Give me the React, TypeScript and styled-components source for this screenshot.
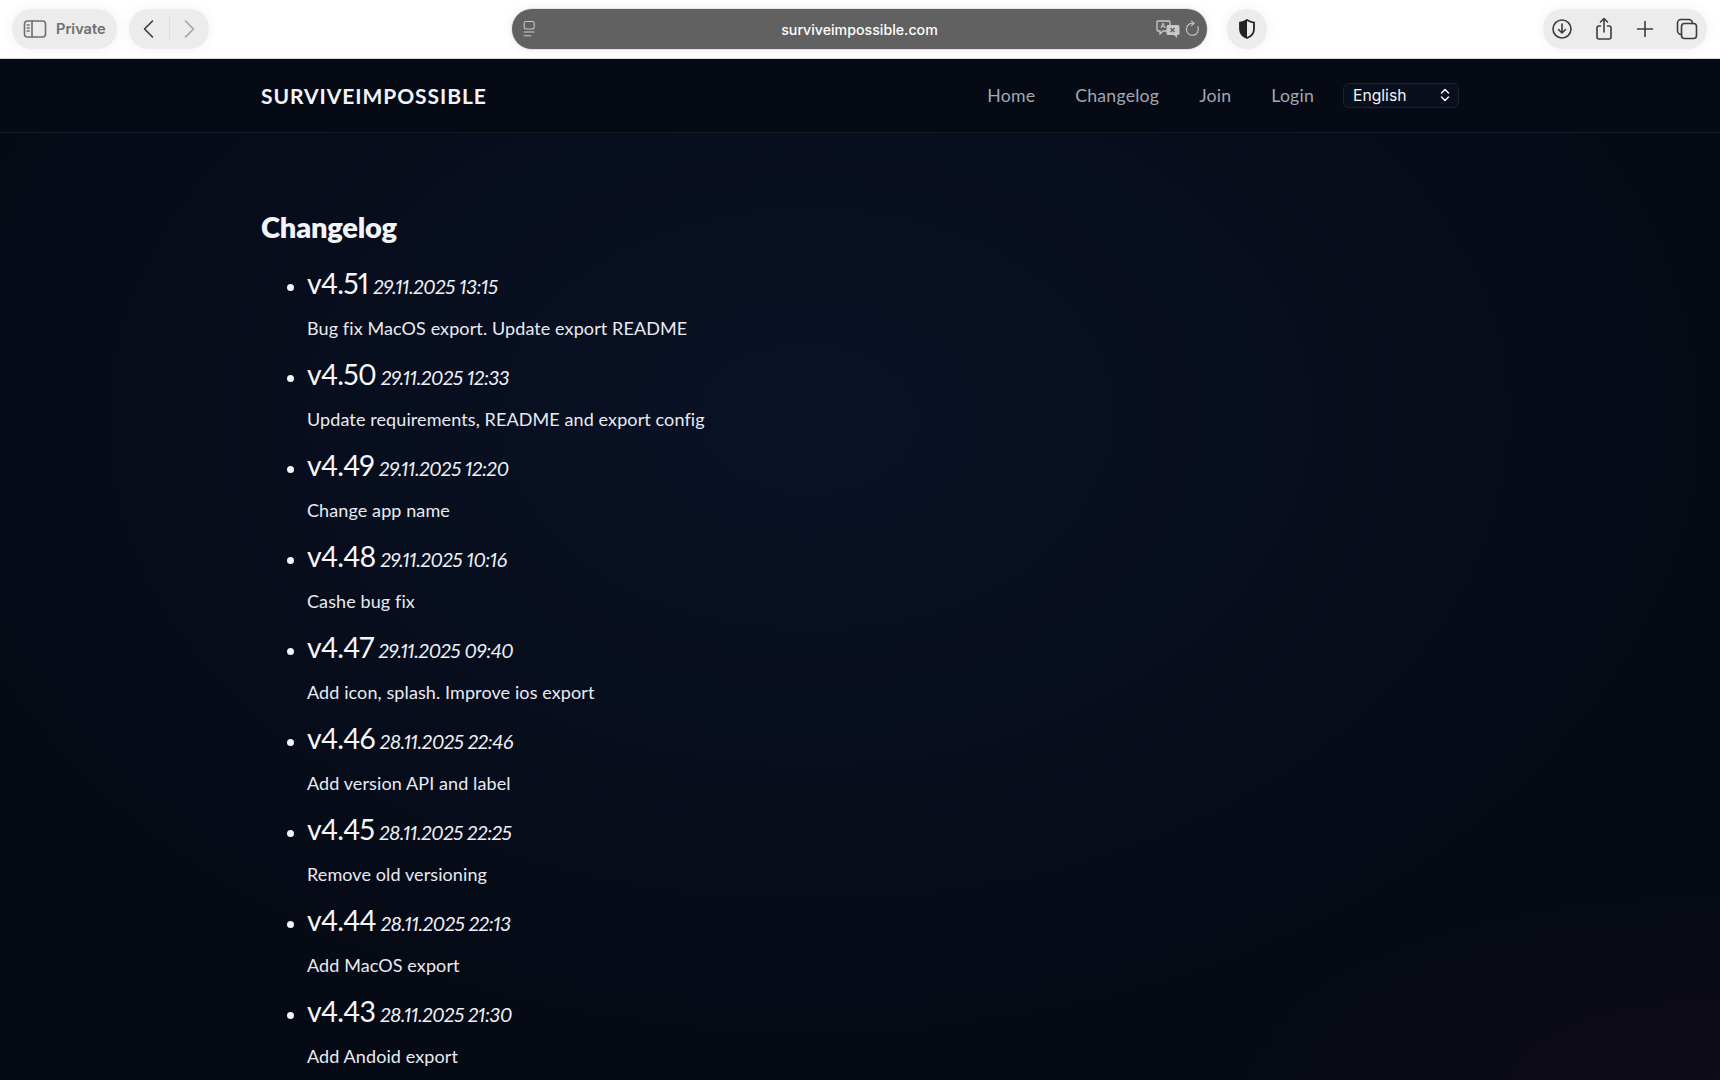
import React from 'react';
import styled, { createGlobalStyle } from 'styled-components';

const GlobalStyle = createGlobalStyle`
  html, body {
    margin: 0;
    padding: 0;
    height: 1080px;
    overflow: hidden;
    background: #050a15;
  }
  * {
    box-sizing: border-box;
  }
`;

const Page = styled.div`
  width: 1720px;
  height: 1080px;
  display: flex;
  flex-direction: column;
  overflow: hidden;
  font-family: 'Lato', 'Liberation Sans', sans-serif;
  font-variant-numeric: proportional-nums;
`;

const Toolbar = styled.div`
  height: 59px;
  flex: none;
  display: flex;
  align-items: center;
  padding: 0 12px;
  background: #fff;
  border-bottom: 1px solid #d8d8d8;
  font-family: 'Inter', 'Liberation Sans', sans-serif;
`;

const Pill = styled.div`
  height: 40px;
  display: flex;
  align-items: center;
  background: #ececec;
  border-radius: 20px;
  box-shadow: 0 0 14px rgba(0, 0, 0, 0.06);
  color: #3c3c3c;
`;

const PrivatePill = styled(Pill)`
  width: 105px;
  padding-left: 11px;
  gap: 9px;
  font-size: 14.6px;
  font-weight: 600;
  color: #6f6f6f;
`;

const NavPill = styled(Pill)`
  width: 80px;
  margin-left: 12px;
`;

const NavSide = styled.div<{ $faded?: boolean }>`
  flex: 1;
  height: 24px;
  display: flex;
  align-items: center;
  justify-content: center;
  color: ${(p) => (p.$faded ? '#a2a2a2' : '#3a3a3a')};
  & + & {
    border-left: 1px solid #dcdcdc;
  }
`;

const AddressBar = styled.div`
  width: 695px;
  height: 40px;
  margin-left: 303px;
  display: flex;
  align-items: center;
  justify-content: space-between;
  padding: 0 5px 0 8px;
  position: relative;
  background: #616161;
  border-radius: 20px;
  box-shadow: 0 0 0 1px #e3e3e3, 0 0 12px rgba(0, 0, 0, 0.08);
  color: #c8c8c8;
`;

const Url = styled.span`
  position: absolute;
  left: 0;
  right: 0;
  text-align: center;
  font-size: 14.2px;
  font-weight: 500;
  color: #fff;
`;

const AddressActions = styled.div`
  display: flex;
  align-items: center;
  gap: 4px;
`;

const ShieldPill = styled(Pill)`
  width: 40px;
  margin-left: 20px;
  justify-content: center;
  color: #222;
`;

const RightPill = styled(Pill)`
  width: 164px;
  margin-left: auto;
  margin-right: 1px;
  padding: 0 8px 0 7px;
  justify-content: space-between;
`;

const SiteHeader = styled.header`
  height: 74px;
  flex: none;
  background: #050a15;
  border-bottom: 1px solid #141a28;
`;

const HeaderInner = styled.div`
  width: 1198px;
  height: 100%;
  margin-left: 261px;
  display: flex;
  align-items: center;
  justify-content: space-between;
`;

const Logo = styled.div`
  font-size: 21px;
  font-weight: 700;
  letter-spacing: 0.95px;
  color: #f3f4fa;
`;

const Nav = styled.nav`
  display: flex;
  align-items: center;
`;

const NavLink = styled.a`
  font-size: 17.7px;
  letter-spacing: 0.2px;
  color: #a4a7b0;
  margin-right: 40px;
  &:last-of-type {
    margin-right: 29px;
  }
`;

const LangSelect = styled.div`
  width: 116px;
  height: 25px;
  display: flex;
  align-items: center;
  justify-content: space-between;
  padding: 0 7px 1px 9px;
  border: 1px solid #1c2233;
  border-radius: 6px;
  background: #0a0f1e;
  font-family: 'Inter', 'Liberation Sans', sans-serif;
  font-size: 15.7px;
  color: #f4f5f8;
`;

const Main = styled.main`
  flex: 1;
  padding: 75px 0 0 261px;
  color: #f3f4fa;
  background:
    radial-gradient(ellipse 900px 620px at 47% 30%, #0a1226 0%, rgba(10, 18, 38, 0) 100%),
    radial-gradient(ellipse 500px 200px at 100% 100%, #0f0b18 0%, rgba(15, 11, 24, 0) 100%),
    #050a15;
`;

const Title = styled.h1`
  margin: 0 0 20px;
  height: 38px;
  line-height: 38px;
  font-size: 29px;
  font-weight: 800;
  letter-spacing: -0.2px;
`;

const Releases = styled.ul`
  margin: 0;
  padding: 0 0 0 46px;
`;

const Release = styled.li`
  height: 91px;
  &::marker {
    font-size: 20px;
  }
`;

const ReleaseHead = styled.div`
  height: 49px;
  line-height: 34px;
  white-space: nowrap;
`;

const Version = styled.span`
  font-size: 28.5px;
  font-weight: 400;
  letter-spacing: -0.75px;
  color: #f6f7fb;
`;

const ReleaseDate = styled.em`
  margin-left: 5px;
  font-size: 20px;
  letter-spacing: -0.45px;
  color: #eef0f6;
`;

const ReleaseNote = styled.p`
  margin: 0;
  font-size: 18px;
  line-height: 26px;
  letter-spacing: 0.1px;
  color: #e9ebf2;
`;

const releases = [
  ['v4.51', '29.11.2025 13:15', 'Bug fix MacOS export. Update export README'],
  ['v4.50', '29.11.2025 12:33', 'Update requirements, README and export config'],
  ['v4.49', '29.11.2025 12:20', 'Change app name'],
  ['v4.48', '29.11.2025 10:16', 'Cashe bug fix'],
  ['v4.47', '29.11.2025 09:40', 'Add icon, splash. Improve ios export'],
  ['v4.46', '28.11.2025 22:46', 'Add version API and label'],
  ['v4.45', '28.11.2025 22:25', 'Remove old versioning'],
  ['v4.44', '28.11.2025 22:13', 'Add MacOS export'],
  ['v4.43', '28.11.2025 21:30', 'Add Andoid export'],
];

const Icon: React.FC<{ size?: number; weight?: number; children: React.ReactNode }> = ({ size = 22, weight = 1.6, children }) => (
  <svg
    width={size}
    height={size}
    viewBox="0 0 24 24"
    fill="none"
    stroke="currentColor"
    strokeWidth={weight}
    strokeLinecap="round"
    strokeLinejoin="round"
  >
    {children}
  </svg>
);

const App: React.FC = () => {
  return (
    <Page>
      <GlobalStyle />
      <Toolbar>
        <PrivatePill>
          <Icon size={24}>
            <rect x="1.5" y="4" width="21" height="16" rx="3" />
            <path d="M9 4v16M4.2 8h2M4.2 11h2M4.2 14h2" />
          </Icon>
          Private
        </PrivatePill>
        <NavPill>
          <NavSide>
            <Icon size={24}>
              <path d="M15.500 4l-8 8 8 8" />
            </Icon>
          </NavSide>
          <NavSide $faded>
            <Icon size={24}>
              <path d="M8.500 4l8 8-8 8" />
            </Icon>
          </NavSide>
        </NavPill>
        <AddressBar>
          <Icon size={20} weight={1.3}>
            <rect x="5" y="3" width="12" height="9" rx="2" />
            <path d="M5 15.500h12M5 20h8" />
          </Icon>
          <Url>surviveimpossible.com</Url>
          <AddressActions>
            <svg width="24" height="20" viewBox="0 0 24 20">
              <path d="M2 2h11a1 1 0 0 1 1 1v8a1 1 0 0 1-1 1H7l-3 3v-3H2a1 1 0 0 1-1-1V3a1 1 0 0 1 1-1z" fill="none" stroke="currentColor" strokeWidth="1.3" />
              <path d="M12 6h10a1.500 1.500 0 0 1 1.500 1.500v7a1.500 1.500 0 0 1-1.500 1.500h-1v3l-3-3h-6a1.500 1.500 0 0 1-1.500-1.500v-7A1.500 1.500 0 0 1 12 6z" fill="currentColor" />
              <path d="M14.500 9l4 4M18.500 9l-4 4" stroke="#616161" strokeWidth="1.400" />
              <path d="M5 9l2-5 2 5M5.800 7.500h2.400" fill="none" stroke="currentColor" strokeWidth="1" />
            </svg>
            <Icon size={18} weight={1.5}>
              <path d="M18.500 9a8 8 0 1 1-5.500-4.500" />
              <path d="M10 1.500l3.500 3-3.500 3" />
            </Icon>
          </AddressActions>
        </AddressBar>
        <ShieldPill>
          <svg width="20" height="22" viewBox="0 0 20 22">
            <path d="M10 2c2.500 1.500 4.500 2.300 7 2.600V11c0 4.500-3 7.500-7 9-4-1.500-7-4.500-7-9V4.600C5.500 4.300 7.500 3.500 10 2z" fill="none" stroke="currentColor" strokeWidth="1.800" />
            <path d="M10 2c-2.500 1.500-4.500 2.300-7 2.600V11c0 4.500 3 7.500 7 9z" fill="currentColor" />
          </svg>
        </ShieldPill>
        <RightPill>
          <Icon size={24}>
            <circle cx="12" cy="12" r="9" />
            <path d="M12 7v9M8.500 12.500L12 16l3.500-3.500" />
          </Icon>
          <Icon size={24}>
            <path d="M8.500 9H7a2 2 0 0 0-2 2v9a2 2 0 0 0 2 2h10a2 2 0 0 0 2-2v-9a2 2 0 0 0-2-2h-1.500" />
            <path d="M12 15V1.500M8.500 5L12 1.500 15.500 5" />
          </Icon>
          <Icon size={24}>
            <path d="M12 4.500v15M4.500 12h15" />
          </Icon>
          <Icon size={24}>
            <rect x="6.500" y="6.500" width="15" height="15" rx="3" />
            <path d="M6.500 17.500A4 4 0 0 1 2.500 13.500V6a3.500 3.500 0 0 1 3.500-3.500h7.500a4 4 0 0 1 4 4" />
          </Icon>
        </RightPill>
      </Toolbar>
      <SiteHeader>
        <HeaderInner>
          <Logo>SURVIVEIMPOSSIBLE</Logo>
          <Nav>
            <NavLink>Home</NavLink>
            <NavLink>Changelog</NavLink>
            <NavLink>Join</NavLink>
            <NavLink>Login</NavLink>
            <LangSelect>
              English
              <svg width="12" height="16" viewBox="0 0 12 16" fill="none" stroke="currentColor" strokeWidth="1.500" strokeLinecap="round" strokeLinejoin="round">
                <path d="M2.500 6L6 2.500 9.500 6M2.500 10L6 13.500 9.500 10" />
              </svg>
            </LangSelect>
          </Nav>
        </HeaderInner>
      </SiteHeader>
      <Main>
        <Title>Changelog</Title>
        <Releases>
          {releases.map(([version, date, note]) => (
            <Release key={version}>
              <ReleaseHead>
                <Version>{version}</Version>
                <ReleaseDate>{date}</ReleaseDate>
              </ReleaseHead>
              <ReleaseNote>{note}</ReleaseNote>
            </Release>
          ))}
        </Releases>
      </Main>
    </Page>
  );
};

export default App;
